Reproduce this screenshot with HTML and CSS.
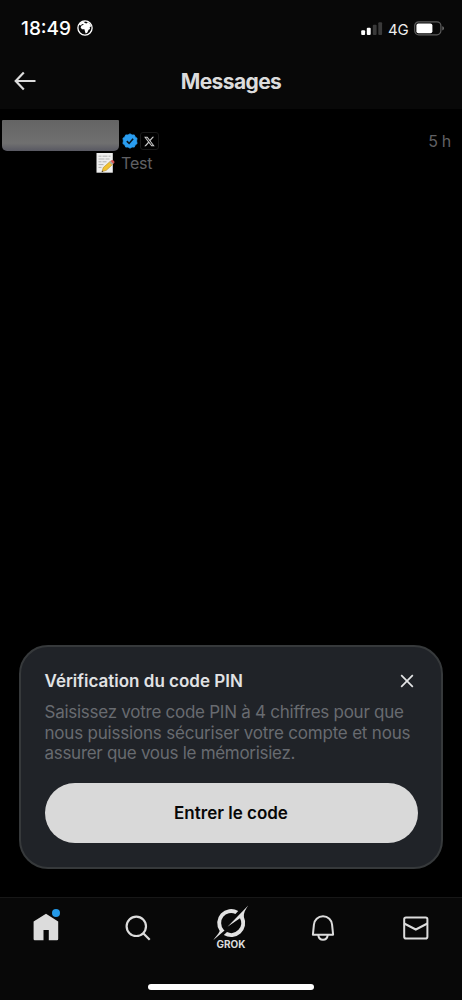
FILE: index.html
```html
<!DOCTYPE html>
<html lang="fr">
<head>
<meta charset="utf-8">
<title>Messages</title>
<link rel="stylesheet" href="styles.css">
</head>
<body>
<div class="screen">
  <header class="top">
    <div class="status">
      <div class="status-left">
        <span class="time">18:49</span>
        <svg class="globe" width="16" height="16" viewBox="0 0 16 16"><circle cx="8" cy="8" r="7.1" fill="#0a0a0a" stroke="#fff" stroke-width="1.300"/><path fill="#fff" d="M2 4.500 4.500 2 8 1.200 7.200 2.800 9.500 3.400 11 2 13 4 14.300 6.600 12.700 7 13 9 11.600 9.800 10.200 12.800 8.600 13.600 7.800 10.800 7.400 9.300 5 9.200 3.600 7.400 4.500 5.600 7 4.800 5.400 4 3.400 5.600Z"/></svg>
      </div>
      <div class="status-right">
        <svg width="22" height="14" viewBox="0 0 22 14"><g fill="#fff"><rect x="0.2" y="8.200" width="3.900" height="4.800" rx="1"/><rect x="5.800" y="5.700" width="3.900" height="7.300" rx="1"/></g><g fill="#3a3a3a"><rect x="11.800" y="2.800" width="3.800" height="10.200" rx="1"/><rect x="17.300" y="0.200" width="3.800" height="12.800" rx="1"/></g></svg>
        <span class="network">4G</span>
        <svg class="battery" width="31" height="15" viewBox="0 0 31 15"><rect x="0.7" y="0.8" width="26.200" height="13" rx="4" fill="none" stroke="#5c5c5c" stroke-width="1.200"/><rect x="2.400" y="2.500" width="16" height="9.700" rx="2" fill="#fff"/><path d="M28.400 5.200c2 .7 2 3.500 0 4.200Z" fill="#777"/></svg>
      </div>
    </div>
    <div class="nav">
      <svg class="back" width="22" height="20" viewBox="0 0 22 20" fill="none" stroke="#dcdcdc" stroke-width="2.200"><path d="M21.500 10H2M9.800 1.500 1.700 10l8.100 8.500"/></svg>
      <h1>Messages</h1>
    </div>
  </header>
  <main class="list">
    <div class="conversation">
      <div class="redacted"></div>
      <div class="names">
        <svg width="16" height="16" viewBox="0 0 16 16"><path fill="#2a9df0" d="M8 .8 10 2l2.300-.1.900 2.100 1.900 1.300L14.600 8l.5 2.600-1.900 1.300-.9 2.200-2.300-.1-2 1.200L6 14l-2.300.1-.9-2.200-1.900-1.300L1.400 8 .9 5.300 2.800 4l.9-2.100L6 2Z" stroke="#2a9df0" stroke-width=".8" stroke-linejoin="round"/><path d="m4.800 8.200 2.300 2.200 4-4.600" fill="none" stroke="#06131c" stroke-width="1.600"/></svg>
        <span class="x-badge"><svg width="11" height="11" viewBox="-1 0 25 24"><path fill="#ccc" d="M18.200 1.200h3.700l-8.100 9.200L23.300 23h-7.500L10 15.300 3.300 23H-.4l8.600-9.900L-.8 1.200h7.700L12.200 8.200Zm-1.300 19.600h2L5.800 3.200H3.600Z"/></svg></span>
      </div>
      <time>5 h</time>
      <div class="preview">
        <svg width="19" height="22" viewBox="0 0 19 22"><path fill="#eee" d="M.5 1h16.300v19.700H.5Z"/><path d="M2.500 4.200h3m1 0h5m1 0h2M2.500 7h6m1 0h4M2.500 9.800h3m1 0h4M2.500 12.600h5M2.500 15.400h3" stroke="#aaa" stroke-width=".9"/><path fill="#f1c232" stroke="#b68a23" stroke-width=".6" d="m6 19.600 1.300-4.100 7-6.200 2.800 2.700-6.800 6.300Z"/><path fill="#aaa" d="m13.300 10.200 1.500-1.300 2.700 2.700-1.500 1.400Z"/><path fill="#d75552" d="m14.500 9.100 1.200-.9c1.300-.6 3.200 1.300 2.700 2.500l-1.100 1.100Z"/><path fill="#333" d="m5.600 20 .6-1.600 1.100 1Z"/></svg>
        <span>Test</span>
      </div>
    </div>
  </main>
  <section class="card">
    <div class="card-head">
      <h2>Vérification du code PIN</h2>
      <svg width="14" height="14" viewBox="0 0 14 14" stroke="#e4e5e6" stroke-width="1.700"><path d="m1.200 1.200 11.600 11.600M12.800 1.200 1.200 12.800"/></svg>
    </div>
    <p><span class="l1">Saisissez votre code PIN à 4 chiffres pour que</span><br><span class="l2">nous puissions sécuriser votre compte et nous</span><br><span class="l3">assurer que vous le mémorisiez.</span></p>
    <button>Entrer le code</button>
  </section>
  <footer class="tabs">
    <div class="tab home"><svg width="26" height="28" viewBox="0 0 26 28"><path fill="#dcdcdc" d="M13 .8 25.200 8.500V26a1.200 1.200 0 0 1-1.200 1.200h-8.200V17h-5.300v10.200H1.800A1.200 1.200 0 0 1 .6 26V8.500Z"/></svg><i class="dot"></i></div>
    <div class="tab search"><svg width="26" height="26" viewBox="0 0 26 26" fill="none" stroke="#dcdcdc" stroke-width="2.200"><circle cx="11.300" cy="11.300" r="9.700"/><path d="m18 18 6.700 6.700"/></svg></div>
    <div class="tab grok"><svg width="36" height="36" viewBox="0 0 36 36" fill="#e2e2e2"><path d="M25.200 5.900A14 14 0 0 0 6.700 26C5.500 29 3 31.500.2 35.200L11.500 25.400 10.500 24.400A10 10 0 0 1 22.400 8.900Z"/><path d="M35.200.6 14.500 21.800 27 13.300A10 10 0 0 1 14 27.100L10.800 29.900A14 14 0 0 0 30.900 12.100C30.300 8.500 32.500 4.500 35.200.6Z"/></svg><span>GROK</span></div>
    <div class="tab"><svg width="24" height="26" viewBox="0 0 24 26" fill="none" stroke="#dcdcdc" stroke-width="2"><path d="M2.900 9.800C3.200 4.900 7 1.300 12 1.300s8.800 3.600 9.100 8.500l1 9.900H1.900Z" stroke-linejoin="round"/><path d="M7.200 20c.5 3 2.300 4.700 4.800 4.700s4.300-1.700 4.800-4.700"/></svg></div>
    <div class="tab mail"><svg width="26" height="24" viewBox="0 0 26 24" fill="none" stroke="#dcdcdc" stroke-width="2"><rect x="1.200" y="1.500" width="23.200" height="21" rx="1.800"/><path d="m1.200 7.500 11.600 6 11.600-6"/></svg></div>
    <div class="indicator"></div>
  </footer>
</div>
</body>
</html>
```
FILE: styles.css
```css
* { box-sizing: border-box; }
body { margin: 0; background: #000; font-family: Inter, "Liberation Sans", sans-serif; }
h1, h2, p { margin: 0; }
svg { display: block; flex: none; }
.screen { width: 462px; height: 1000px; display: flex; flex-direction: column; background: #000; overflow: hidden; }
.top { height: 109px; background: #080808; }
.status { height: 57px; display: flex; justify-content: space-between; padding: 0 17px 0 21px; }
.status-left { display: flex; gap: 5px; }
.time { color: #fff; font-size: 19px; line-height: 22px; font-weight: 500; padding-top: 18px; width: 51px; white-space: nowrap; }
.globe { margin-top: 20px; }
.status-right { display: flex; padding-top: 22px; }
.network { color: #eee; font-size: 15px; line-height: 15px; font-weight: 400; margin-left: 5px; width: 21px; letter-spacing: -0.3px; }
.battery { margin-left: 5px; margin-top: -1px; }
.nav { height: 52px; display: grid; grid-template-columns: 80px 1fr 80px; }
.back { margin: 14px 0 0 14px; }
h1 { font-size: 21px; line-height: 26px; font-weight: 700; color: #dcdcdc; text-align: center; padding-top: 12px; letter-spacing: -0.6px; }
.list { flex: 1; padding-top: 11px; }
.conversation { display: grid; grid-template-columns: 117px 1fr auto; padding: 0 11px 0 2px; column-gap: 3px; }
.redacted { height: 31px; background: linear-gradient(#646464, #707070 75%, #585862); border-radius: 1px 1px 5px 5px; }
.names { display: flex; gap: 2px; padding-top: 13px; }
.x-badge { width: 19px; height: 18px; margin-top: -1px; border: 1px solid #191919; border-radius: 3px; display: flex; align-items: center; justify-content: center; }
time { color: #606164; font-size: 16px; line-height: 20px; padding-top: 11px; letter-spacing: -0.3px; }
.preview { grid-column: 1 / -1; display: flex; gap: 6px; padding-left: 94px; color: #606164; font-size: 16px; line-height: 22px; letter-spacing: -0.2px; margin-top: 1px; }
.card { height: 224px; margin: 0 19px 28px; padding: 23px 23.500px 0; background: #202328; border: 2px solid #36393b; border-radius: 29px; }
.card-head { display: flex; justify-content: space-between; align-items: center; height: 22px; padding-right: 4px; }
h2 { color: #e1e2e4; font-size: 17px; line-height: 22px; font-weight: 600; white-space: nowrap; }
.card p { color: #686b70; font-size: 17px; line-height: 20.700px; margin-top: 10px; height: 63px; white-space: nowrap; }
.l1 { letter-spacing: -0.260px; }
.l2 { letter-spacing: -0.200px; }
.l3 { letter-spacing: -0.290px; }
button { display: block; width: 100%; height: 60px; margin-top: 18px; border: 0; border-radius: 30px; background: #d9d9d9; color: #070707; font: 600 17px/60px Inter, "Liberation Sans", sans-serif; padding: 0; }
.tabs { position: relative; height: 103px; background: #080808; border-top: 1px solid #171717; display: grid; grid-template-columns: repeat(5, 92.400px); }
.tab { position: relative; display: flex; flex-direction: column; align-items: center; padding-top: 17px; }
.home { padding-top: 15px; }
.search { padding-right: 2px; }
.mail { padding-top: 18px; }
.dot { position: absolute; left: 52px; top: 11px; width: 8px; height: 8px; border-radius: 50%; background: #2499e8; }
.grok { padding-top: 7px; color: #dcdcdc; font-size: 10px; line-height: 7px; font-weight: 700; }
.indicator { position: absolute; left: 148px; top: 86px; width: 166px; height: 6px; border-radius: 3px; background: #fff; }
```
